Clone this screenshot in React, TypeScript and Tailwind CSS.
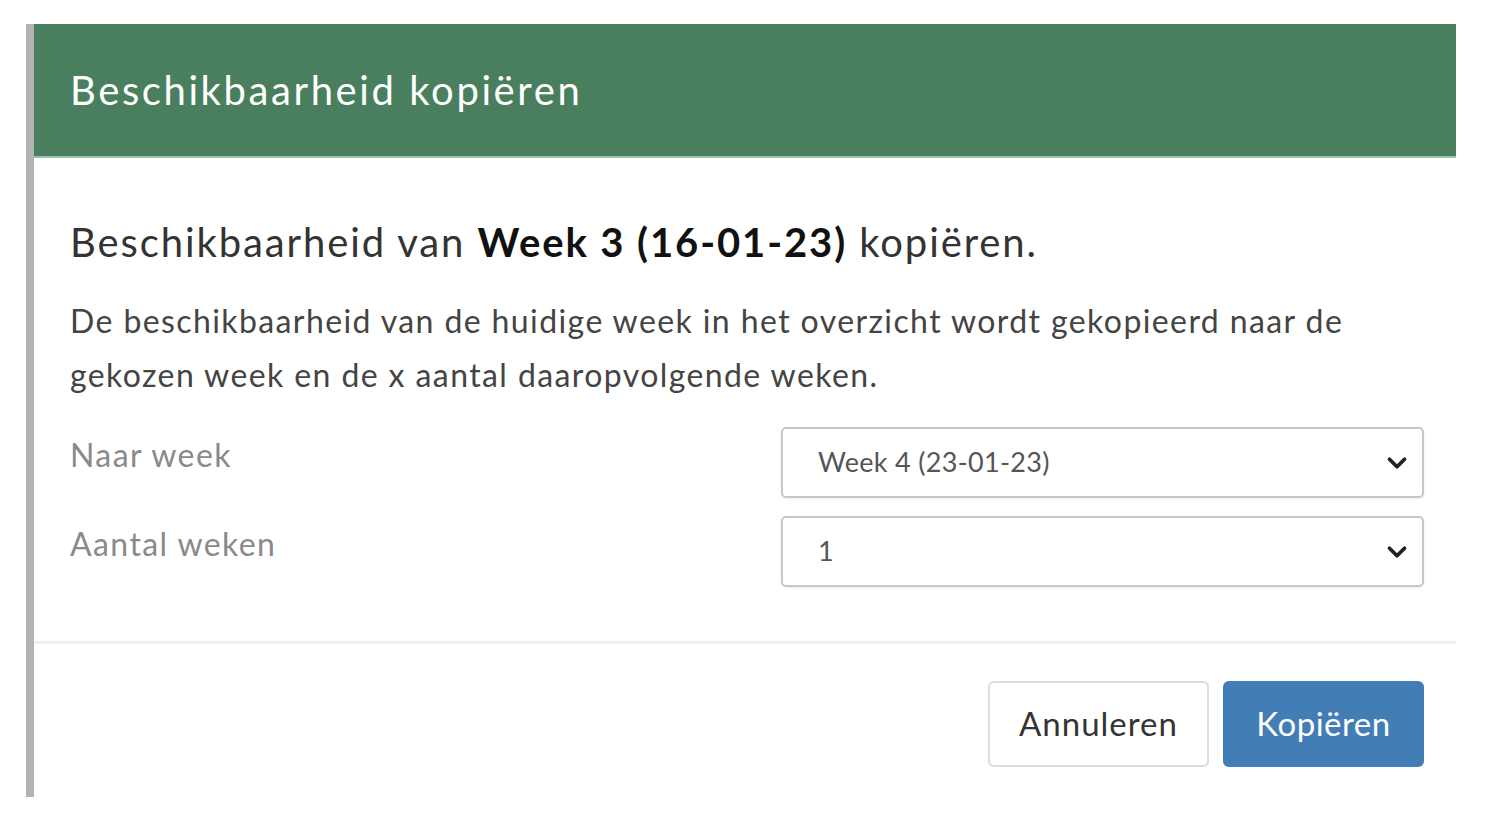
import { ChevronDown } from "lucide-react";

const font = { fontFamily: "Lato, 'Open Sans', sans-serif" };

function SelectBox({ value }: { value: string }) {
  return (
    <div className="flex h-[71px] w-[643px] items-center justify-between rounded-[5px] border-2 border-[#c8c8c8] pl-[35px] pr-[10px] shadow-[0_1px_2px_rgba(0,0,0,0.08)]">
      <span className="text-[27px] tracking-[0.3px] text-[#555]">{value}</span>
      <ChevronDown className="h-[30px] w-[30px] text-[#222]" strokeWidth={3} />
    </div>
  );
}

export default function App() {
  return (
    <div className="min-h-screen bg-white pt-[24px] pl-[26px]" style={font}>
      <div className="w-[1430px] border-l-[8px] border-[#b3b3b3] bg-white">
        <div className="flex h-[134px] items-center border-b-2 border-[#9fbfa9] bg-[#497f5e] pl-[36px]">
          <h1 className="text-[40px] font-normal tracking-[2.6px] text-white">
            Beschikbaarheid kopiëren
          </h1>
        </div>

        <div className="pl-[36px] pr-[32px] pt-[56px] pb-[54px]">
          <h2 className="text-[40px] leading-[56px] tracking-[1.9px] text-[#333]">
            Beschikbaarheid van{" "}
            <span className="font-bold text-[#111]">Week 3 (16-01-23)</span>{" "}
            kopiëren.
          </h2>
          <p className="mt-[24px] max-w-[1300px] text-[32px] leading-[54px] tracking-[1.4px] text-[#444]">
            De beschikbaarheid van de huidige week in het overzicht wordt
            gekopieerd naar de gekozen week en de x aantal daaropvolgende weken.
          </p>

          <div className="mt-[25px] flex flex-col gap-[18px]">
            <div className="flex items-start justify-between">
              <label className="pt-[4px] text-[32px] tracking-[1.4px] text-[#8a8a8a]">Naar week</label>
              <SelectBox value="Week 4 (23-01-23)" />
            </div>
            <div className="flex items-start justify-between">
              <label className="pt-[4px] text-[32px] tracking-[1.4px] text-[#8a8a8a]">Aantal weken</label>
              <SelectBox value="1" />
            </div>
          </div>
        </div>

        <div className="flex justify-end gap-[14px] border-t-[3px] border-[#f0f0f0] px-[32px] pt-[37px] pb-[30px]">
          <button className="h-[86px] w-[221px] rounded-[6px] border-2 border-[#dcdcdc] bg-white text-[33px] tracking-[1px] text-[#333]">
            Annuleren
          </button>
          <button className="h-[86px] w-[201px] rounded-[6px] bg-[#427db5] text-[33px] tracking-[0.5px] text-white">
            Kopiëren
          </button>
        </div>
      </div>
    </div>
  );
}
